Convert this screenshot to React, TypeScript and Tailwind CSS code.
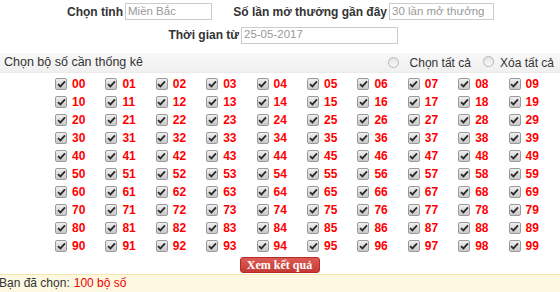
import React from "react";

const font = { fontFamily: '"Liberation Sans", Arial, sans-serif' };

function Check() {
  return (
    <span className="inline-flex h-[12px] w-[12px] shrink-0 items-center justify-center rounded-[2px] border border-[#9a9a9a] bg-gradient-to-b from-[#f0f0f0] to-[#c8c8c8]">
      <svg width="9" height="8" viewBox="0 0 9 8">
        <path d="M1 4.2 L3.4 6.4 L8 1.4" fill="none" stroke="#2a2a2a" strokeWidth="1.8" />
      </svg>
    </span>
  );
}

function Radio() {
  return (
    <span className="inline-block h-[11px] w-[11px] rounded-full border border-[#b5b5b5] bg-gradient-to-b from-[#e4e4e4] to-[#fafafa]" />
  );
}

export default function App() {
  const nums = Array.from({ length: 100 }, (_, i) => String(i).padStart(2, "0"));
  return (
    <div className="relative h-[292px] w-[560px] overflow-hidden bg-white text-[12px] text-[#333]" style={font}>
      <div className="flex h-[23px] items-center">
        <div className="w-[123px] text-right font-bold text-[#333]">Chọn tỉnh</div>
        <div className="ml-[2px] flex h-[17px] w-[87px] items-center border border-[#ccc] px-[2px] text-[11.5px] text-[#999]">Miền Bắc</div>
        <div className="w-[175px] text-right font-bold text-[#333]">Số lần mở thưởng gần đây</div>
        <div className="ml-[2px] flex h-[17px] w-[105px] items-center overflow-hidden whitespace-nowrap border border-[#ccc] px-[2px] text-[11.5px] text-[#999]">30 lần mở thưởng</div>
      </div>
      <div className="flex h-[24px] items-center">
        <div className="w-[239px] text-right font-bold text-[#333]">Thời gian từ</div>
        <div className="ml-[2px] flex h-[17px] w-[157px] items-center border border-[#ccc] px-[2px] text-[11.5px] text-[#999]">25-05-2017</div>
      </div>
      <div className="mt-[6px] flex h-[20px] items-center border-b border-[#ebebeb] bg-gradient-to-b from-[#f8f8f8] to-[#f0f0f0] pl-[4px] text-[12.5px] text-[#333]">
        <span>Chọn bộ số cần thống kê</span>
        <div className="ml-auto flex items-center pr-[6px] text-[12px]">
          <Radio />
          <span className="ml-[11px]">Chọn tất cả</span>
          <span className="ml-[12px]"><Radio /></span>
          <span className="ml-[6px]">Xóa tất cả</span>
        </div>
      </div>
      <div className="ml-[50px] mt-[2px] grid w-[504px] grid-cols-10">
        {nums.map((n) => (
          <div key={n} className="flex h-[18px] items-center pl-[5px]">
            <Check />
            <span className="ml-[5px] font-bold text-[#f00]">{n}</span>
          </div>
        ))}
      </div>
      <div className="mt-[2px] flex justify-center pr-[1px]">
        <div
          className="flex h-[16px] w-[80px] items-center justify-center rounded-[3px] border border-[#b52b27] bg-gradient-to-b from-[#dd5a55] to-[#c63a35] text-[12px] font-bold text-white"
          style={{ fontFamily: '"Liberation Serif", "Times New Roman", serif' }}
        >
          Xem kết quả
        </div>
      </div>
      <div className="mt-[1px] flex h-[19px] items-center border-t border-[#f5e7a8] bg-[#fcf8e1] pb-[2px] text-[12px]">
        <span className="-ml-[1px] text-[#333]">Bạn đã chọn:</span>
        <span className="ml-[4px] text-[#e00]">100 bộ số</span>
      </div>
    </div>
  );
}
